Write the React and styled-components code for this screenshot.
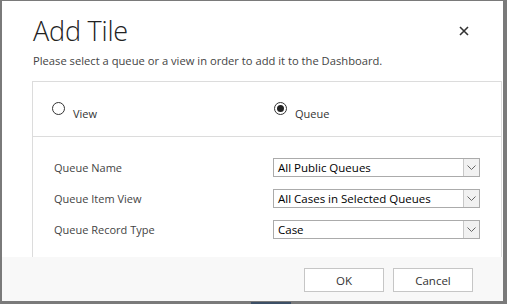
import React from 'react';
import styled, { createGlobalStyle } from 'styled-components';

const Global = createGlobalStyle`
    html, body {
        margin: 0;
        padding: 0;
        background: #7a7a7a;
    }
    * {
        box-sizing: border-box;
    }
`;

const Backdrop = styled.div`
    position: relative;
    width: 507px;
    height: 304px;
    padding: 1px 4px 3px 2px;
    background: #7a7a7a;
    font-family: "Open Sans", "Noto Sans", sans-serif;
`;

const Dialog = styled.div`
    display: flex;
    flex-direction: column;
    width: 100%;
    height: 100%;
    background: #fff;
`;

const Header = styled.div`
    position: relative;
    padding: 11px 0 0 31px;
    height: 80px;
`;

const Title = styled.h1`
    margin: 0;
    font-size: 27px;
    font-weight: 300;
    line-height: 38px;
    color: #222;
    letter-spacing: -0.2px;
`;

const Subtitle = styled.p`
    margin: 3px 0 0;
    font-size: 11.2px;
    line-height: 16px;
    color: #444;
`;

const Close = styled.button`
    position: absolute;
    top: 22px;
    right: 32px;
    width: 15px;
    height: 15px;
    padding: 0;
    border: 0;
    background: none;
    display: flex;
    align-items: center;
    justify-content: center;
`;

const Panel = styled.div`
    flex: 1;
    margin: 0 1px 0 30px;
    border: 1px solid #dcdcdc;
    border-bottom: none;
    display: flex;
    flex-direction: column;
`;

const RadioRow = styled.div`
    height: 55px;
    border-bottom: 1px solid #dcdcdc;
    display: grid;
    grid-template-columns: 222px 1fr;
    padding: 20px 0 0 19px;
`;

const RadioOption = styled.label`
    display: flex;
    align-items: flex-start;
    gap: 8px;
    font-size: 11px;
    color: #333;
`;

const RadioCircle = styled.span`
    width: 13px;
    height: 13px;
    border-radius: 50%;
    border: 1px solid #333;
    display: flex;
    align-items: center;
    justify-content: center;
    &::after {
        content: '';
        width: 7px;
        height: 7px;
        border-radius: 50%;
        background: ${({ $checked }) => ($checked ? '#222' : 'transparent')};
    }
`;

const RadioLabel = styled.span`
    margin-top: 5px;
    line-height: 14px;
`;

const Form = styled.div`
    display: flex;
    flex-direction: column;
    gap: 12px;
    padding: 21px 0 0 21px;
`;

const Row = styled.div`
    display: grid;
    grid-template-columns: 219px 207px;
    align-items: center;
`;

const Label = styled.span`
    font-size: 11px;
    color: #444;
`;

const Select = styled.div`
    height: 19px;
    border: 1px solid #ababab;
    display: flex;
    align-items: center;
    justify-content: space-between;
    padding-left: 4px;
    font-size: 11.5px;
    color: #000;
`;

const Arrow = styled.span`
    width: 16px;
    height: 17px;
    border-left: 1px solid #c8c8c8;
    background: #f1f1f1;
    display: flex;
    align-items: center;
    justify-content: center;
`;

const Footer = styled.div`
    height: 44px;
    background: #f8f8f8;
    display: flex;
    justify-content: flex-end;
    align-items: flex-start;
    gap: 9px;
    padding: 11px 30px 0 0;
`;

const Button = styled.button`
    width: 80px;
    height: 24px;
    border: 1px solid #c6c6c6;
    background: #fff;
    font-family: inherit;
    font-size: 11.5px;
    color: #333;
    padding: 0;
`;

const Taskbit = styled.div`
    position: absolute;
    left: 251px;
    bottom: 0;
    width: 40px;
    height: 2px;
    background: #3c4f66;
`;

const fields = [
    { label: 'Queue Name', value: 'All Public Queues' },
    { label: 'Queue Item View', value: 'All Cases in Selected Queues' },
    { label: 'Queue Record Type', value: 'Case' },
];

const Chevron = () => (
    <svg width="9" height="5" viewBox="0 0 9 5">
        <polyline points="0.5,0.5 4.5,4.5 8.5,0.5" fill="none" stroke="#666" strokeWidth="1" />
    </svg>
);

export default function App() {
    return (
        <Backdrop>
            <Global />
            <Dialog>
                <Header>
                    <Title>Add Tile</Title>
                    <Subtitle>Please select a queue or a view in order to add it to the Dashboard.</Subtitle>
                    <Close aria-label="Close">
                        <svg width="10" height="10" viewBox="0 0 10 10">
                            <path d="M1 1 L9 9 M9 1 L1 9" stroke="#333" strokeWidth="1.6" />
                        </svg>
                    </Close>
                </Header>
                <Panel>
                    <RadioRow>
                        <RadioOption>
                            <RadioCircle />
                            <RadioLabel>View</RadioLabel>
                        </RadioOption>
                        <RadioOption>
                            <RadioCircle $checked />
                            <RadioLabel>Queue</RadioLabel>
                        </RadioOption>
                    </RadioRow>
                    <Form>
                        {fields.map((f) => (
                            <Row key={f.label}>
                                <Label>{f.label}</Label>
                                <Select>
                                    {f.value}
                                    <Arrow><Chevron /></Arrow>
                                </Select>
                            </Row>
                        ))}
                    </Form>
                </Panel>
                <Footer>
                    <Button>OK</Button>
                    <Button>Cancel</Button>
                </Footer>
            </Dialog>
            <Taskbit />
        </Backdrop>
    );
}
